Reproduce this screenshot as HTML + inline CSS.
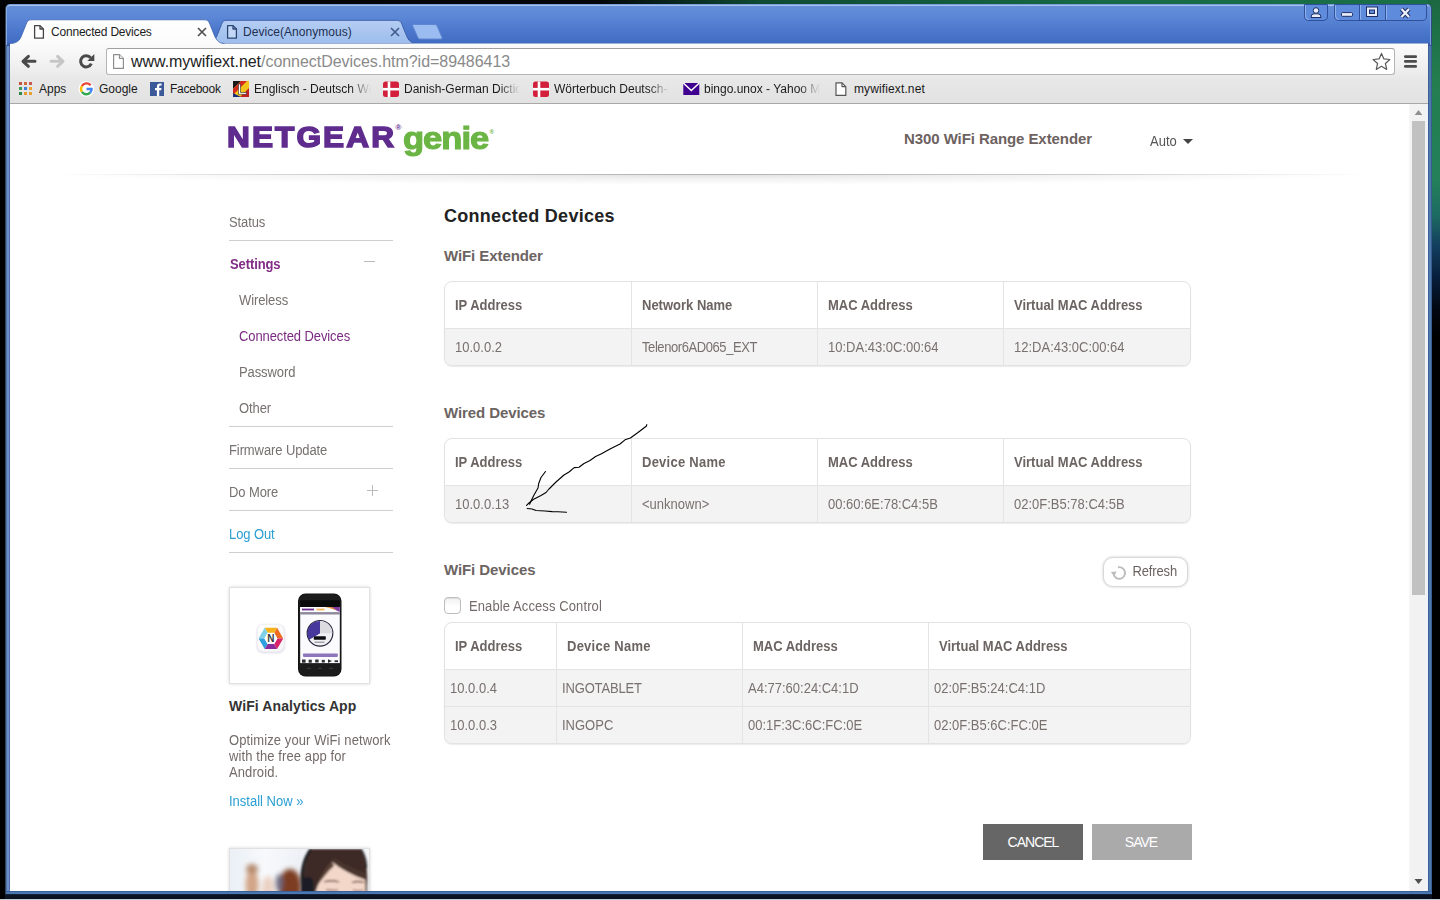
<!DOCTYPE html>
<html lang="en">
<head>
<meta charset="utf-8">
<title>Connected Devices</title>
<style>
*{box-sizing:border-box;margin:0;padding:0}
html,body{width:1440px;height:900px;overflow:hidden;background:#000;font-family:"Liberation Sans",Arial,sans-serif}
body{position:relative}
.abs{position:absolute}
/* desktop */
#desk-top{left:0;top:0;width:1440px;height:6px;background:linear-gradient(90deg,#010305 0,#03070a 600px,#0f4a33 760px,#176a45 1100px,#1a7048 1440px)}
#desk-right{left:1428px;top:0;width:12px;height:900px;background:linear-gradient(180deg,#1b6843 0,#237d4e 80px,#23805a 180px,#1d6b63 215px,#133f5e 245px,#08203f 275px,#02060f 310px,#000 340px)}
/* window */
#win{left:5px;top:4px;width:1427px;height:890px;border-left:1px solid #34445a;border-right:1px solid #2c4a8a;border-radius:5px 5px 0 0;background:linear-gradient(180deg,#7fa3df 0,#648ed7 2px,#5b86d6 14px,#4a76cb 28px,#416cc3 39px,#37589f 40px,#3f69bd 60px,#3c64b0 100%);box-shadow:0 1px 0 #14213a,0 5px 0 #0b1220}
#win-hi{left:6px;top:5px;width:1425px;height:40px;border-radius:4px 4px 0 0;border-top:1px solid #a9c2ea;border-left:1px solid #8aaade;border-right:1px solid #7d9ed6;pointer-events:none}
/* tabs */
.tabtxt{font-size:12px;color:#1c1c1c;white-space:nowrap;line-height:14px;letter-spacing:-.2px}
/* toolbar */
#toolbar{left:10px;top:44px;width:1418px;height:34px;background:linear-gradient(180deg,#fbfbfb 0,#f1f1f1 60%,#e9e9e9 100%);border-radius:3px 3px 0 0}
#omni{left:106px;top:48px;width:1289px;height:27px;background:#fff;border:1px solid #b5b5b5;border-top-color:#9f9f9f;border-radius:3px}
#url{left:131px;top:52px;font-size:16px;line-height:19px;color:#222;white-space:nowrap;letter-spacing:-0.04px}
#url span{color:#8a8a8a}
#bookmarks{left:10px;top:78px;width:1418px;height:26px;background:linear-gradient(180deg,#e8e8e8 0,#e2e2e2 100%);border-bottom:1px solid #a8a8a8}
.bm{font-size:12px;color:#1a1a1a;white-space:nowrap;line-height:14px;top:82px;overflow:hidden}
.fade{-webkit-mask-image:linear-gradient(90deg,#000 0,#000 82%,transparent 100%);mask-image:linear-gradient(90deg,#000 0,#000 82%,transparent 100%)}
.tx{display:inline-block;transform:scaleY(1.08)}
#nav li,#chklbl,#ptext span,#plink,#lang,#refresh span{transform:scaleY(1.08)}
#ptext span{display:block}
/* page */
#page{left:10px;top:104px;width:1399px;height:787px;background:#fff;overflow:hidden}
#scroll{left:1409px;top:104px;width:19px;height:787px;background:linear-gradient(90deg,#f6f6f6 0,#f2f2f2 3px,#f2f2f2 15px,#eef3f7 100%)}
#thumb{left:1412px;top:121px;width:13px;height:474px;background:#c1c1c1}

#page *{white-space:nowrap}
#hdr{left:0;top:0;width:1399px;height:70px;background:#fff}
#hdr-shadow{left:40px;top:70px;width:1320px;height:11px;background:linear-gradient(90deg,rgba(0,0,0,0) 0,rgba(0,0,0,.17) 22%,rgba(0,0,0,.2) 50%,rgba(0,0,0,.17) 78%,rgba(0,0,0,0) 100%) 0 0/100% 1px no-repeat,radial-gradient(ellipse 50% 100% at 50% 0,rgba(0,0,0,.13) 0,rgba(0,0,0,.06) 40%,rgba(0,0,0,0) 100%)}
#logo-n{left:217.2px;top:14.9px;font-size:29px;line-height:36px;font-weight:bold;color:#5f2c8e;letter-spacing:1.9px;-webkit-text-stroke:1.5px #5f2c8e;transform:scaleX(1.09);transform-origin:0 0}
#logo-g{left:393.2px;top:15.6px;font-size:31px;line-height:38px;font-weight:bold;color:#6bb544;letter-spacing:-0.9px;-webkit-text-stroke:1.1px #6bb544;transform:scaleX(1.115);transform-origin:0 0}
.reg{font-size:8px;font-weight:bold;position:absolute;line-height:8px}
#model{left:894px;top:26px;font-size:15px;line-height:18px;font-weight:bold;color:#6d625f;letter-spacing:-.08px}
#lang{left:1140px;top:30px;font-size:13px;line-height:15px;color:#555}
#caret{left:1172.500px;top:34.500px;width:0;height:0;border-left:5px solid transparent;border-right:5px solid transparent;border-top:5.500px solid #444}
#nav{left:219px;top:0;width:164px;list-style:none}
#nav li{position:absolute;left:0;font-size:13px;line-height:15px;color:#777170;letter-spacing:-.1px}
#nav li.sub{left:10px}
#nav li.sel{color:#7a2b81}
#nav li.cur{color:#822c86;font-weight:bold;left:1px}
#nav li.link{color:#2b9fd2}
.sep{position:absolute;left:219px;width:164px;height:1px;background:#cfcfcf}
h1{position:absolute;left:434px;top:101px;font-size:18px;line-height:22px;color:#222;font-weight:bold;letter-spacing:.28px}
h2{position:absolute;left:434px;font-size:15px;line-height:18px;color:#6c6462;font-weight:bold;letter-spacing:-.08px}
table{position:absolute;left:434px;width:747px;border-collapse:separate;border-spacing:0;border:1px solid #e2e2e2;border-radius:8px;background:#fff;box-shadow:0 1px 1px rgba(0,0,0,.08);table-layout:fixed;overflow:hidden}
th{height:46px;text-align:left;padding:0 0 0 10px;font-size:13px;font-weight:bold;color:#6c6462;border-left:1px solid #e4e4e4;vertical-align:middle}
td{height:37px;padding:0 0 0 10px;font-size:13px;color:#79716f;background:#f3f3f3;border-left:1px solid #e4e4e4;border-top:1px solid #e4e4e4;vertical-align:middle}
th:first-child,td:first-child{border-left:0}
#t3 td{padding-left:5px}
#promo1,#promo2{left:219px;width:141px;border:1px solid #e1e1e1;background:#fff;box-shadow:0 0 3px rgba(0,0,0,.16)}
#ptitle{left:219px;top:594px;font-size:14px;line-height:17px;font-weight:bold;color:#333;letter-spacing:.1px}
#ptext{left:219px;top:629px;font-size:13px;line-height:16px;color:#736b69;white-space:normal;letter-spacing:.1px}
#plink{left:219px;top:690px;font-size:13px;line-height:15px;color:#2b9fd2}
#chk{left:434px;top:493px;width:17px;height:17px;border:1px solid #bdbdbd;border-radius:4px;background:linear-gradient(180deg,#f1f1f1 0,#fff 55%);box-shadow:inset 0 1px 1px rgba(0,0,0,.08)}
#chklbl{left:459px;top:495px;font-size:13px;line-height:15px;color:#736b69;letter-spacing:.1px}
#refresh{left:1093px;top:453px;width:85px;height:30px;border:1px solid #d9d9d9;border-radius:10px;background:#fff;box-shadow:0 0 3px rgba(0,0,0,.2)}
#refresh span{position:absolute;left:28.500px;top:6px;font-size:13px;line-height:15px;color:#6a6361;letter-spacing:-.15px}
.btn{position:absolute;top:720px;width:100px;height:36px;color:#fff;font-size:14px;line-height:36px;text-align:center;letter-spacing:-1px}
</style>
</head>
<body>
<div id="desk-top" class="abs"></div>
<div id="desk-right" class="abs"></div>
<div id="win" class="abs"></div>
<div id="win-hi" class="abs"></div>
<div class="abs" style="left:0;top:899px;width:1440px;height:1px;background:#c3cad4"></div>



<svg class="abs" style="left:0;top:0" width="1440" height="48" viewBox="0 0 1440 48">
  <defs>
    <linearGradient id="tabi" x1="0" y1="0" x2="0" y2="1"><stop offset="0" stop-color="#b4cdf3"/><stop offset="1" stop-color="#9dbdec"/></linearGradient>
    <linearGradient id="taba" x1="0" y1="0" x2="0" y2="1"><stop offset="0" stop-color="#ffffff"/><stop offset="1" stop-color="#fafafa"/></linearGradient>
  </defs>
  <!-- new tab button -->
  <path d="M412.5 25.5 Q413 24.5 414.5 24.5 L435 24.5 Q436.5 24.5 437 25.8 L442 37.5 Q442.4 39 441 39 L420 39 Q418.5 39 418 37.8 Z" fill="#9bbcf0" stroke="#5f86d2" stroke-width="1"/>
  <!-- inactive tab -->
  <path d="M207 43.5 C214 43.500 216 38 217.500 34.500 L221.500 24.500 C222.700 21.500 223.500 20.300 227 20.300 L396.500 20.300 C400 20.300 400.800 21.500 402 24.500 L406 34.500 C407.500 38 409.500 43.500 416.500 43.500 Z" fill="url(#tabi)" stroke="#3e62ad" stroke-width="1"/>
  <!-- active tab -->
  <path d="M10 44 L10 43.5 C19 43.500 20.500 38 22 34.500 L26 24.500 C27.200 21.500 28 19.800 31.500 19.800 L204.500 19.800 C208 19.800 208.800 21.500 210 24.500 L214 34.500 C215.500 38 217.500 43.500 224.500 43.500 L1428 43.5 L1428 48 L10 48 Z" fill="url(#taba)"/>
  <path d="M10 43.5 C19 43.500 20.500 38 22 34.500 L26 24.500 C27.200 21.500 28 19.800 31.500 19.800 L204.500 19.800 C208 19.800 208.800 21.500 210 24.500 L214 34.500 C215.500 38 217.500 43.500 224.500 43.500" fill="none" stroke="#3a5fae" stroke-width="1" opacity=".75"/>
  <!-- page icons -->
  <g fill="#fff" stroke="#444" stroke-width="1.3" stroke-linejoin="round">
    <path d="M34.600 25.600 L40 25.600 L43.400 29 L43.400 38.200 L34.600 38.200 Z"/><path d="M40 25.600 L40 29 L43.400 29" fill="none"/>
  </g>
  <g fill="#c3d8f6" stroke="#2c4673" stroke-width="1.3" stroke-linejoin="round">
    <path d="M227.600 25.600 L233 25.600 L236.400 29 L236.400 38.200 L227.600 38.200 Z"/><path d="M233 25.600 L233 29 L236.400 29" fill="none"/>
  </g>
  <!-- tab close x -->
  <path d="M198 28 L206 36 M206 28 L198 36" stroke="#4d4d4d" stroke-width="1.6" fill="none"/>
  <path d="M391 28 L399 36 M399 28 L391 36" stroke="#3f5a8a" stroke-width="1.6" fill="none"/>
  <!-- window controls -->
  <g fill="#5f8bdc" stroke="#2f519c" stroke-width="1">
    <path d="M1304.500 4.500 L1327.500 4.500 L1327.500 16 Q1327.500 20.500 1323 20.500 L1309 20.500 Q1304.500 20.500 1304.500 16 Z"/>
    <path d="M1334.500 4.500 L1426.500 4.500 L1426.500 16 Q1426.500 20.500 1422 20.500 L1339 20.500 Q1334.500 20.500 1334.500 16 Z"/>
    <path d="M1359.500 4.500 L1359.500 20.500 M1385.500 4.500 L1385.500 20.500" fill="none"/>
  </g>
  <g fill="none" stroke="#9dbcf0" stroke-width="1" opacity=".8">
    <path d="M1305.500 5 L1305.500 16 Q1305.500 19.500 1309 19.500"/>
    <path d="M1335.500 5 L1335.500 16 Q1335.500 19.500 1339 19.500"/>
    <path d="M1360.500 5 L1360.500 19.500 M1386.500 5 L1386.500 19.500"/>
  </g>
  <!-- user icon -->
  <g fill="#e8eefc" stroke="#1f2f63" stroke-width="1">
    <circle cx="1316" cy="10.500" r="2.800"/>
    <path d="M1311 17.500 Q1311 13.800 1314 13.800 L1318 13.800 Q1321 13.800 1321 17.500 Z"/>
  </g>
  <!-- minimize -->
  <rect x="1341.500" y="12.600" width="11" height="3.700" rx="1" fill="#e8eefc" stroke="#1f2f63" stroke-width="1"/>
  <!-- maximize -->
  <rect x="1366.500" y="7" width="11" height="9.500" fill="#e8eefc" stroke="#1f2f63" stroke-width="1"/>
  <rect x="1369.500" y="10" width="5" height="3.500" fill="#5f8bdc" stroke="#1f2f63" stroke-width="1"/>
  <!-- close X -->
  <path d="M1401.500 9 L1409 17 M1409 9 L1401.500 17" stroke="#1f2f63" stroke-width="4.200" fill="none"/>
  <path d="M1401.500 9 L1409 17 M1409 9 L1401.500 17" stroke="#eef2fd" stroke-width="2.200" fill="none"/>
</svg>
<div class="abs tabtxt" style="left:51px;top:25px">Connected Devices</div>
<div class="abs tabtxt" style="left:243px;top:25px;color:#1d2f52;letter-spacing:.05px">Device(Anonymous)</div>


<div id="toolbar" class="abs"></div>
<div id="omni" class="abs"></div>
<div id="url" class="abs">www.mywifiext.net<span>/connectDevices.htm?id=89486413</span></div>
<div id="bookmarks" class="abs"></div>


<svg class="abs" style="left:0;top:44px" width="1440" height="60" viewBox="0 44 1440 60">
  <!-- back -->
  <path d="M35 61.300 L23.500 61.300 M28.400 56.300 L23 61.300 L28.400 66.300" fill="none" stroke="#4a4a4a" stroke-width="3" stroke-linecap="round" stroke-linejoin="round"/>
  <!-- forward -->
  <path d="M51 61.300 L62.500 61.300 M57.600 56.300 L63 61.300 L57.600 66.300" fill="none" stroke="#c6c6c6" stroke-width="3" stroke-linecap="round" stroke-linejoin="round"/>
  <!-- reload -->
  <path d="M90.600 57.800 A5.600 5.600 0 1 0 91.300 63.600" fill="none" stroke="#4a4a4a" stroke-width="3"/>
  <path d="M94.300 54 L94.300 61 L87.300 61 Z" fill="#4a4a4a"/>
  <!-- omnibox page icon -->
  <g fill="#fff" stroke="#8f8f8f" stroke-width="1.200" stroke-linejoin="round">
    <path d="M113.600 54.600 L119.500 54.600 L123.400 58.500 L123.400 68.400 L113.600 68.400 Z"/><path d="M119.500 54.600 L119.500 58.500 L123.400 58.500" fill="#eee"/>
  </g>
  <!-- star -->
  <path d="M1381.500 53.400 L1383.900 58.900 L1389.900 59.500 L1385.400 63.500 L1386.700 69.400 L1381.500 66.300 L1376.300 69.400 L1377.600 63.500 L1373.100 59.500 L1379.100 58.900 Z" fill="#fff" stroke="#5a5a5a" stroke-width="1.200" stroke-linejoin="round"/>
  <!-- menu -->
  <g fill="#4d4d4d"><rect x="1404" y="55.200" width="13" height="2.700" rx="1.200"/><rect x="1404" y="60.100" width="13" height="2.700" rx="1.200"/><rect x="1404" y="65" width="13" height="2.700" rx="1.200"/></g>
  <!-- apps -->
  <g>
    <rect x="19" y="82" width="3" height="3" fill="#c2543f"/><rect x="24" y="82" width="3" height="3" fill="#cf6a3c"/><rect x="29" y="82" width="3" height="3" fill="#c65a50"/>
    <rect x="19" y="87" width="3" height="3" fill="#3f9a55"/><rect x="24" y="87" width="3" height="3" fill="#3d7fd6"/><rect x="29" y="87" width="3" height="3" fill="#eea12f"/>
    <rect x="19" y="92" width="3" height="3" fill="#2f8a4a"/><rect x="24" y="92" width="3" height="3" fill="#e79a2d"/><rect x="29" y="92" width="3" height="3" fill="#e9a030"/>
  </g>
  <!-- google G -->
  <circle cx="86.300" cy="89" r="7.800" fill="#fff"/>
  <g fill="none" stroke-width="2.400">
    <path d="M90.600 85.300 A5.300 5.300 0 0 0 81.900 86.100" stroke="#ea4335"/>
    <path d="M81.900 86.100 A5.300 5.300 0 0 0 81.900 91.900" stroke="#fbbc05"/>
    <path d="M81.900 91.900 A5.300 5.300 0 0 0 90.200 92.600" stroke="#34a853"/>
    <path d="M90.200 92.600 A5.300 5.300 0 0 0 91.600 89 L86.500 89" stroke="#4285f4"/>
  </g>
  <!-- facebook -->
  <rect x="150" y="82" width="14" height="14" fill="#3b5998"/>
  <path d="M159.200 96 L159.200 90.300 L161.200 90.300 L161.500 88 L159.200 88 L159.200 86.700 Q159.200 85.600 160.400 85.600 L161.600 85.600 L161.600 83.500 Q160.800 83.400 159.900 83.400 Q156.900 83.400 156.900 86.400 L156.900 88 L155 88 L155 90.300 L156.900 90.300 L156.900 96 Z" fill="#fff"/>
  <!-- leo dict icon -->
  <g>
    <rect x="233" y="81" width="16" height="16" fill="#f3c51c"/>
    <path d="M233 81 L241 81 L233 89 Z" fill="#1a1a1a"/>
    <path d="M233 89 L241 81 L247 81 L233 95 Z" fill="#d22a1f"/>
    <path d="M233 97 L233 93 L241 97 Z" fill="#1b2f7c"/>
    <path d="M249 97 L249 88 L240 97 Z" fill="#c3211f"/>
    <path d="M238.500 84 L240.500 84 L240.500 92.500 L246.500 92.500 L246.500 94.300 L238.500 94.300 Z" fill="#fff" stroke="#2a2a2a" stroke-width=".6"/>
  </g>
  <!-- danish flags -->
  <g id="dk1">
    <rect x="383" y="81.500" width="16" height="15.500" rx="2.500" fill="#d21f3c"/>
    <rect x="387.700" y="81.500" width="2.600" height="15.500" fill="#fff"/><rect x="383" y="87.900" width="16" height="2.600" fill="#fff"/>
  </g>
  <g id="dk2">
    <rect x="533" y="81.500" width="16" height="15.500" rx="2.500" fill="#d21f3c"/>
    <rect x="537.700" y="81.500" width="2.600" height="15.500" fill="#fff"/><rect x="533" y="87.900" width="16" height="2.600" fill="#fff"/>
  </g>
  <!-- yahoo mail -->
  <rect x="683.300" y="83" width="16" height="12" fill="#400090"/>
  <path d="M683.300 83 L691.300 90.500 L699.300 83" fill="none" stroke="#fff" stroke-width="1.500"/>
  <!-- page icon -->
  <g fill="#fff" stroke="#555" stroke-width="1.200" stroke-linejoin="round">
    <path d="M836 82.800 L842 82.800 L845.800 86.600 L845.800 95.400 L836 95.400 Z"/><path d="M842 82.800 L842 86.600 L845.800 86.600" fill="none"/>
  </g>
</svg>
<div class="abs bm" style="left:39px">Apps</div>
<div class="abs bm" style="left:99px">Google</div>
<div class="abs bm" style="left:170px;letter-spacing:-.25px">Facebook</div>
<div class="abs bm fade" style="left:254px;width:117px">Englisch - Deutsch Wörterbuch</div>
<div class="abs bm fade" style="left:404px;width:116px">Danish-German Dictionary</div>
<div class="abs bm fade" style="left:554px;width:115px">Wörterbuch Deutsch-Dänisch</div>
<div class="abs bm fade" style="left:704px;width:116px">bingo.unox - Yahoo Mail</div>
<div class="abs bm" style="left:854px;letter-spacing:.12px">mywifiext.net</div>


<div id="page" class="abs">

<div id="hdr" class="abs"></div>
<div id="hdr-shadow" class="abs"></div>
<div id="logo-n" class="abs">NETGEAR</div>
<div id="logo-g" class="abs">genie</div>
<div class="reg" style="left:385.5px;top:20px;color:#5f2c8e">®</div>
<div class="reg" style="left:479.5px;top:24px;color:#6bb544;font-size:6px">®</div>
<div id="model" class="abs">N300 WiFi Range Extender</div>
<div id="lang" class="abs">Auto</div>
<div id="caret" class="abs"></div>

<ul id="nav" class="abs">
  <li style="top:111px">Status</li>
  <li class="cur" style="top:153px">Settings</li>
  <li class="sub" style="top:189px">Wireless</li>
  <li class="sub sel" style="top:225px">Connected Devices</li>
  <li class="sub" style="top:261px">Password</li>
  <li class="sub" style="top:297px">Other</li>
  <li style="top:339px">Firmware Update</li>
  <li style="top:381px">Do More</li>
  <li class="link" style="top:423px">Log Out</li>
</ul>
<div class="sep" style="top:136px"></div>
<div class="sep" style="top:322px"></div>
<div class="sep" style="top:364px"></div>
<div class="sep" style="top:406px"></div>
<div class="sep" style="top:448px"></div>
<div class="abs" style="left:354px;top:157px;width:11px;height:1px;background:#bbb"></div>
<div class="abs" style="left:357px;top:386px;width:11px;height:1px;background:#bbb"></div>
<div class="abs" style="left:362px;top:381px;width:1px;height:11px;background:#bbb"></div>


<div id="promo1" class="abs" style="top:483px;height:97px">
<svg width="139" height="95" viewBox="0 0 139 95" style="display:block">
  <defs>
    <filter id="sh" x="-30%" y="-30%" width="160%" height="160%"><feGaussianBlur stdDeviation="1.300"/></filter>
    <linearGradient id="hexg" x1="0" y1="0" x2="1" y2="1"><stop offset="0" stop-color="#fff"/><stop offset="1" stop-color="#f4f4f4"/></linearGradient>
  </defs>
  <!-- app icon -->
  <g transform="translate(18.500,13)">
    <rect x="8.500" y="23.800" width="27.500" height="28" rx="6" fill="#c8c0d8" opacity=".7" filter="url(#sh)"/>
    <rect x="9" y="23.800" width="26.500" height="27" rx="6" fill="url(#hexg)"/>
    <path d="M34.7 37.4 L28.6 26.7 L25.6 31.9 L28.7 37.4 Z" fill="#ee6a1f"/><path d="M28.6 26.7 L16.2 26.7 L19.2 31.9 L25.6 31.9 Z" fill="#f6b21d"/><path d="M16.2 26.7 L10.1 37.4 L16.1 37.4 L19.2 31.9 Z" fill="#7fd0e8"/><path d="M10.1 37.4 L16.2 48.1 L19.2 42.9 L16.1 37.4 Z" fill="#2f9fe0"/><path d="M16.2 48.1 L28.6 48.1 L25.6 42.9 L19.2 42.9 Z" fill="#8a2d9c"/><path d="M28.6 48.1 L34.7 37.4 L28.7 37.4 L25.6 42.9 Z" fill="#d8246a"/>
    <path d="M29.0 37.4 L25.7 31.7 L19.1 31.7 L15.8 37.4 L19.1 43.1 L25.7 43.1 Z" fill="#fff"/>
    <text x="22.400" y="41" font-family="Liberation Sans, Arial, sans-serif" font-weight="bold" font-size="10" text-anchor="middle" fill="#3a3a3a">N</text>
  </g>
  <!-- phone --><g transform="translate(-1,.3)">
  <rect x="69" y="5.200" width="43.500" height="83" rx="7.500" fill="#111"/>
  <rect x="69.800" y="6" width="41.900" height="81.400" rx="7" fill="#1c1c1c"/>
  <rect x="71.200" y="12" width="39.600" height="7" fill="#0a0a0a"/>
  <rect x="71.200" y="18.800" width="39.600" height="56" fill="#fbfbfd"/>
  <rect x="71.200" y="18.800" width="39.600" height="5" fill="#fff"/>
  <rect x="73" y="20.300" width="12" height="1.800" fill="#6a2c91"/>
  <rect x="87.500" y="20.300" width="8" height="1.800" fill="#f0a030" opacity=".8"/>
  <path d="M100 18.800 L110.800 18.800 L110.800 23.800 Z" fill="#7a3aa0"/><path d="M96 18.800 L103 18.800 L108 22 Z" fill="#f0902a" opacity=".8"/>
  <rect x="71.200" y="23.800" width="39.600" height="2.400" fill="#8c879c"/>
  <!-- gauge -->
  <circle cx="91" cy="45" r="12.800" fill="#f1f1f3" stroke="#2a2540" stroke-width="1.200"/>
  <path d="M91 45 L91 32.600 A12.400 12.400 0 0 1 103.400 45 Z" fill="#dcdce0"/>
  <path d="M91 45 L80.200 51.200 A12.400 12.400 0 0 1 91 32.600 Z" fill="#47389d"/>
  <path d="M80.200 51.200 A12.400 12.400 0 0 1 78.600 45 L91 45 Z" fill="#47389d"/>
  <rect x="84.800" y="48" width="12" height="3.400" rx=".6" fill="#0d0d12"/>
  <rect x="85.500" y="53.300" width="10" height="1.300" fill="#9a9aa2"/>
  <rect x="74" y="65.200" width="34.800" height="3.400" rx=".8" fill="#8d74bb"/>
  <g fill="#2e2e36"><rect x="73" y="71.200" width="3.600" height="3.200"/><rect x="79.600" y="71.400" width="3.200" height="3"/><rect x="86.200" y="71.200" width="3.400" height="3"/><rect x="92.800" y="71.600" width="3" height="2.600"/><path d="M99 71 L103 72.800 L99 74.600 Z"/><rect x="105.600" y="72" width="3.400" height="1.800"/></g>
  <g fill="#3c3c3c"><rect x="78" y="79.500" width="4" height="1" /><rect x="89" y="79.500" width="4" height="1"/><rect x="100" y="79.500" width="4" height="1"/></g>
</g>
</svg>
</div>
<div id="promo2" class="abs" style="top:744px;height:60px">
<svg width="139" height="58" viewBox="0 0 139 58" style="display:block">
  <defs>
    <filter id="bl" x="-30%" y="-30%" width="160%" height="160%"><feGaussianBlur stdDeviation="2.400"/></filter>
    <filter id="bl2" x="-30%" y="-30%" width="160%" height="160%"><feGaussianBlur stdDeviation=".8"/></filter>
    <linearGradient id="bgp" x1="0" y1="0" x2="1" y2="0"><stop offset="0" stop-color="#eaf0f6"/><stop offset=".25" stop-color="#f7f9fc"/><stop offset=".5" stop-color="#eef2f7"/><stop offset="1" stop-color="#f3f5f9"/></linearGradient>
  </defs>
  <rect width="139" height="58" fill="url(#bgp)"/>
  <g filter="url(#bl)">
    <ellipse cx="22" cy="36" rx="6.500" ry="16" fill="#d2a586"/>
    <ellipse cx="22" cy="20" rx="6" ry="5" fill="#b58a6c"/>
    <ellipse cx="38" cy="40" rx="6" ry="13" fill="#ead0c2"/>
    <ellipse cx="60" cy="38" rx="11.500" ry="18" fill="#7b3d24"/>
    <ellipse cx="49" cy="34" rx="3.500" ry="9" fill="#6e6f86"/>
  </g>
  <g filter="url(#bl2)">
    <path d="M72 58 C70 40 72 18 80 0 L131 0 C136 8 138 22 137 36 L137 58 Z" fill="#3d2c26"/>
    <path d="M84 58 C84 44 88 30 102 12.500 C108 17 120 22 135 29.500 L136 58 Z" fill="#f3d7c9"/>
    <path d="M102 12.500 C96 18 90 28 86.500 38 C92 30 98 22 104 17 Z" fill="#5a4036"/>
    <path d="M102 12.500 C110 20 124 27 136 31 L136 24 C124 20 112 14 104 9 Z" fill="#4a352d"/>
    <path d="M73 40 C70 26 73 10 81 0" fill="none" stroke="#14151a" stroke-width="2.600"/>
    <path d="M131 0 C135 6 136.500 12 136.500 19" fill="none" stroke="#1c1c20" stroke-width="1.300"/>
    <rect x="71" y="28" width="12.500" height="30" rx="5.500" fill="#1d1e25"/>
    <path d="M94 33 Q101 30.500 109 33" stroke="#6a4436" stroke-width="1.300" fill="none"/>
    <path d="M122 33.500 Q128 31.500 134 33.500" stroke="#6a4436" stroke-width="1.300" fill="none"/>
    <path d="M96 40.500 Q102 42 108 40.800" stroke="#8a5548" stroke-width="1.100" fill="none"/>
    <path d="M123 41 Q128 42.300 133 41" stroke="#8a5548" stroke-width="1.100" fill="none"/>
  </g>
</svg>
</div>

<div id="ptitle" class="abs">WiFi Analytics App</div>
<div id="ptext" class="abs" style="width:175px"><span>Optimize your WiFi network</span><span>with the free app for</span><span>Android.</span></div>
<div id="plink" class="abs">Install Now »</div>

<h1>Connected Devices</h1>
<h2 style="top:143px">WiFi Extender</h2>
<table id="t1" style="top:177px">
  <colgroup><col style="width:186px"><col style="width:186px"><col style="width:186px"><col></colgroup>
  <tr><th><span class="tx">IP Address</span></th><th><span class="tx">Network Name</span></th><th><span class="tx">MAC Address</span></th><th><span class="tx">Virtual MAC Address</span></th></tr>
  <tr><td><span class="tx">10.0.0.2</span></td><td><span class="tx" style="letter-spacing:-.42px">Telenor6AD065_EXT</span></td><td><span class="tx">10:DA:43:0C:00:64</span></td><td><span class="tx">12:DA:43:0C:00:64</span></td></tr>
</table>
<h2 style="top:300px">Wired Devices</h2>
<table id="t2" style="top:334px">
  <colgroup><col style="width:186px"><col style="width:186px"><col style="width:186px"><col></colgroup>
  <tr><th><span class="tx">IP Address</span></th><th><span class="tx" style="letter-spacing:.25px">Device Name</span></th><th><span class="tx">MAC Address</span></th><th><span class="tx">Virtual MAC Address</span></th></tr>
  <tr><td><span class="tx">10.0.0.13</span></td><td><span class="tx">&lt;unknown&gt;</span></td><td><span class="tx">00:60:6E:78:C4:5B</span></td><td><span class="tx">02:0F:B5:78:C4:5B</span></td></tr>
</table>
<h2 style="top:457px">WiFi Devices</h2>
<div id="refresh" class="abs">
  <svg class="abs" style="left:6px;top:5.500px" width="18" height="18" viewBox="0 0 18 18"><path d="M8 3.300 A5.800 5.800 0 1 1 3.700 10.800" fill="none" stroke="#bcbcbc" stroke-width="1.900"/><path d="M.8 8 L6.600 7.400 L4.200 12.400 Z" fill="#bcbcbc"/></svg>
  <span>Refresh</span>
</div>
<div id="chk" class="abs"></div>
<div id="chklbl" class="abs">Enable Access Control</div>
<table id="t3" style="top:518px">
  <colgroup><col style="width:111px"><col style="width:186px"><col style="width:186px"><col></colgroup>
  <tr><th><span class="tx">IP Address</span></th><th><span class="tx" style="letter-spacing:.25px">Device Name</span></th><th><span class="tx">MAC Address</span></th><th><span class="tx">Virtual MAC Address</span></th></tr>
  <tr><td><span class="tx">10.0.0.4</span></td><td><span class="tx" style="letter-spacing:-.15px">INGOTABLET</span></td><td><span class="tx">A4:77:60:24:C4:1D</span></td><td><span class="tx">02:0F:B5:24:C4:1D</span></td></tr>
  <tr><td><span class="tx">10.0.0.3</span></td><td><span class="tx">INGOPC</span></td><td><span class="tx">00:1F:3C:6C:FC:0E</span></td><td><span class="tx">02:0F:B5:6C:FC:0E</span></td></tr>
</table>
<svg class="abs" style="left:500px;top:310px" width="160" height="110" viewBox="510 414 160 110">
  <g fill="none" stroke="#000" stroke-width="1.100" stroke-linejoin="round" stroke-linecap="round">
    <path d="M646.800 424.500 L646.500 426 L638 432.500 L630.400 438 L625 439.800 L620 444 L610 449 L601 454 L595.600 456.500 L590 460.500 L584 463.500 L579 467.300 L574.200 467.600 L569 472 L564 475 L556 482 L549 489 L546 492.500 L541 495.500 L533.200 499.500 L529 503 L526.500 505.300"/>
    <path d="M545.500 471.500 L541 477.500 L538.700 483.500 L538 488 L534 495 L531.500 500 L529.600 504.300"/>
    <path d="M527.100 508.500 L532 509 L536 510.500 L545 511 L552.200 511.600 L558 511.800 L566.500 512.300"/>
  </g>
</svg>
<div class="btn" style="left:973px;background:#666">CANCEL</div>
<div class="btn" style="left:1082px;background:#aaa;padding-right:2px">SAVE</div>

</div>
<div id="scroll" class="abs"></div>
<div id="thumb" class="abs"></div>
<svg class="abs" style="left:1409px;top:104px" width="19" height="787" viewBox="0 0 19 787"><path d="M9.500 6 L13.300 11 L5.700 11 Z" fill="#8f8f8f"/><path d="M5.500 775 L13.500 775 L9.500 780 Z" fill="#4f4f4f"/></svg>
<div class="abs" style="left:1428px;top:46px;width:4px;height:848px;background:linear-gradient(90deg,#2f4f86 0,#4d79ae 1.2px,#4d79ae 3px,#1f426f 4px)"></div>
<div class="abs" style="left:6px;top:46px;width:4px;height:848px;background:linear-gradient(90deg,#3a5a92 0,#6c8fc8 1.2px,#6c8fc8 3px,#2d4d8d 4px)"></div>
<div class="abs" style="left:6px;top:891px;width:1426px;height:3px;background:linear-gradient(180deg,#2c4f86 0,#4a77b0 1.2px,#4a77b0 100%)"></div>
</body>
</html>
